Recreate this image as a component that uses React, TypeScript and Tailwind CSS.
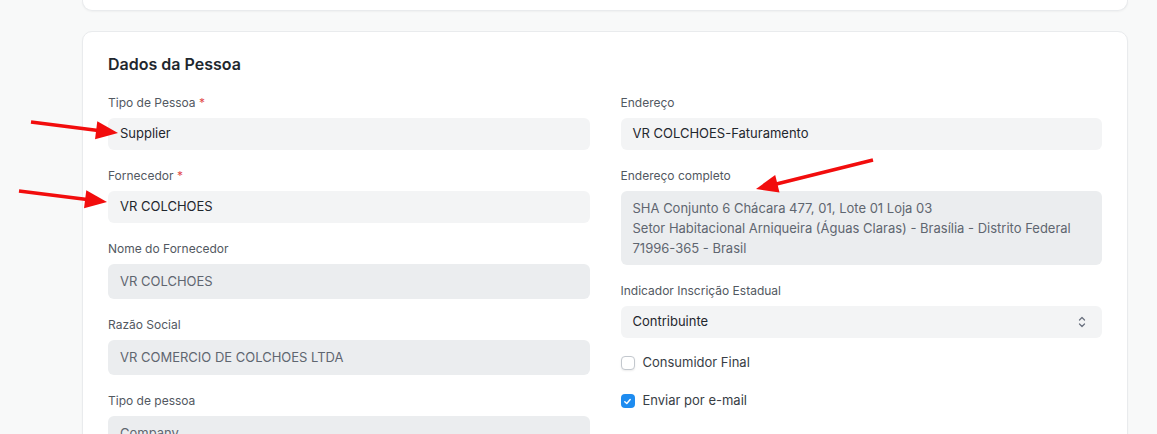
import React from 'react';

type Pt = [number, number];

const Arrow: React.FC<{ from: Pt; to: Pt }> = ({ from, to }) => {
  const dx = to[0] - from[0];
  const dy = to[1] - from[1];
  const len = Math.hypot(dx, dy);
  const ux = dx / len;
  const uy = dy / len;
  const headLen = 22;
  const half = 9;
  const bx = to[0] - ux * headLen;
  const by = to[1] - uy * headLen;
  const pts = [
    `${to[0]},${to[1]}`,
    `${bx - uy * half},${by + ux * half}`,
    `${bx + uy * half},${by - ux * half}`,
  ].join(' ');
  return (
    <g>
      <line x1={from[0]} y1={from[1]} x2={bx + ux * 2} y2={by + uy * 2} stroke="#f20d0d" strokeWidth={3.5} />
      <polygon points={pts} fill="#f20d0d" />
    </g>
  );
};

const Label: React.FC<{ text: string; required?: boolean }> = ({ text, required }) => (
  <div className="h-4 mb-[7px] text-[12px] leading-4 text-[#525861]">
    {text}
    {required && <span className="text-[#e24c4c]"> *</span>}
  </div>
);

const Field: React.FC<{ label: string; value: string; required?: boolean; readOnly?: boolean }> = ({
  label,
  value,
  required,
  readOnly,
}) => (
  <div className="mb-[18px]">
    <Label text={label} required={required} />
    {readOnly ? (
      <div className="h-[35px] px-3 flex items-center rounded-md bg-[#ebedef] text-[13px] text-[#5f6670]">{value}</div>
    ) : (
      <div className="h-8 px-3 flex items-center rounded-md bg-[#f3f4f5] text-[13px] text-[#1f272e]">{value}</div>
    )}
  </div>
);

const Checkbox: React.FC<{ label: string; checked?: boolean }> = ({ label, checked }) => (
  <div className="flex items-center gap-2 h-4">
    {checked ? (
      <span className="w-[14px] h-[14px] rounded-[4px] bg-[#1e8cf0] flex items-center justify-center">
        <svg width="9" height="9" viewBox="0 0 10 10" fill="none">
          <path d="M2 5.2 L4.2 7.3 L8 2.8" stroke="white" strokeWidth="1.6" strokeLinecap="round" strokeLinejoin="round" />
        </svg>
      </span>
    ) : (
      <span className="w-[14px] h-[14px] rounded-[4px] border border-[#c3c8ce] bg-white shadow-[0_1px_2px_rgba(0,0,0,0.08)]" />
    )}
    <span className="text-[13px] text-[#383e45]">{label}</span>
  </div>
);

export default function App() {
  return (
    <div className="relative min-h-screen h-[434px] overflow-hidden bg-[#f8f9f9] pl-[82px] pr-[29px] font-['Inter',sans-serif]">
      <div className="h-[11px] rounded-b-[10px] bg-white border border-t-0 border-[#e9ebed] shadow-[0_1px_2px_rgba(0,0,0,0.04)]" />
      <div className="mt-[20px] rounded-[10px] bg-white border border-[#e9ebed] shadow-[0_1px_2px_rgba(0,0,0,0.04)] pt-[22px] px-[25px] pb-6">
        <h2 className="h-5 leading-5 text-[16px] font-semibold text-[#1f272e]">Dados da Pessoa</h2>
        <div className="mt-[21px] grid grid-cols-2 gap-x-[31px]">
          <div>
            <Field label="Tipo de Pessoa" value="Supplier" required />
            <Field label="Fornecedor" value="VR COLCHOES" required />
            <Field label="Nome do Fornecedor" value="VR COLCHOES" readOnly />
            <Field label="Razão Social" value="VR COMERCIO DE COLCHOES LTDA" readOnly />
            <Field label="Tipo de pessoa" value="Company" readOnly />
          </div>
          <div>
            <Field label="Endereço" value="VR COLCHOES-Faturamento" />
            <div className="mb-[18px]">
              <Label text="Endereço completo" />
              <div className="rounded-md bg-[#ebedef] px-3 py-[7px] text-[13px] leading-5 text-[#5f6670]">
                <div>SHA Conjunto 6 Chácara 477, 01, Lote 01 Loja 03</div>
                <div>Setor Habitacional Arniqueira (Águas Claras) - Brasília - Distrito Federal</div>
                <div>71996-365 - Brasil</div>
              </div>
            </div>
            <div className="mb-[17px]">
              <Label text="Indicador Inscrição Estadual" />
              <div className="h-8 pl-3 pr-[14px] flex items-center justify-between rounded-md bg-[#f3f4f5] text-[13px] text-[#1f272e]">
                <span>Contribuinte</span>
                <svg width="12" height="14" viewBox="0 0 12 14" fill="none" stroke="#6b7280" strokeWidth="1.3" strokeLinecap="round" strokeLinejoin="round">
                  <path d="M3.5 5 L6 2.5 L8.5 5" />
                  <path d="M3.5 9 L6 11.5 L8.5 9" />
                </svg>
              </div>
            </div>
            <div className="flex flex-col gap-[22px]">
              <Checkbox label="Consumidor Final" />
              <Checkbox label="Enviar por e-mail" checked />
            </div>
          </div>
        </div>
      </div>
      <svg className="absolute inset-0 pointer-events-none" width="1157" height="434">
        <Arrow from={[31, 122]} to={[118, 133]} />
        <Arrow from={[19, 191]} to={[107, 202]} />
        <Arrow from={[873, 160]} to={[756, 189]} />
      </svg>
    </div>
  );
}
